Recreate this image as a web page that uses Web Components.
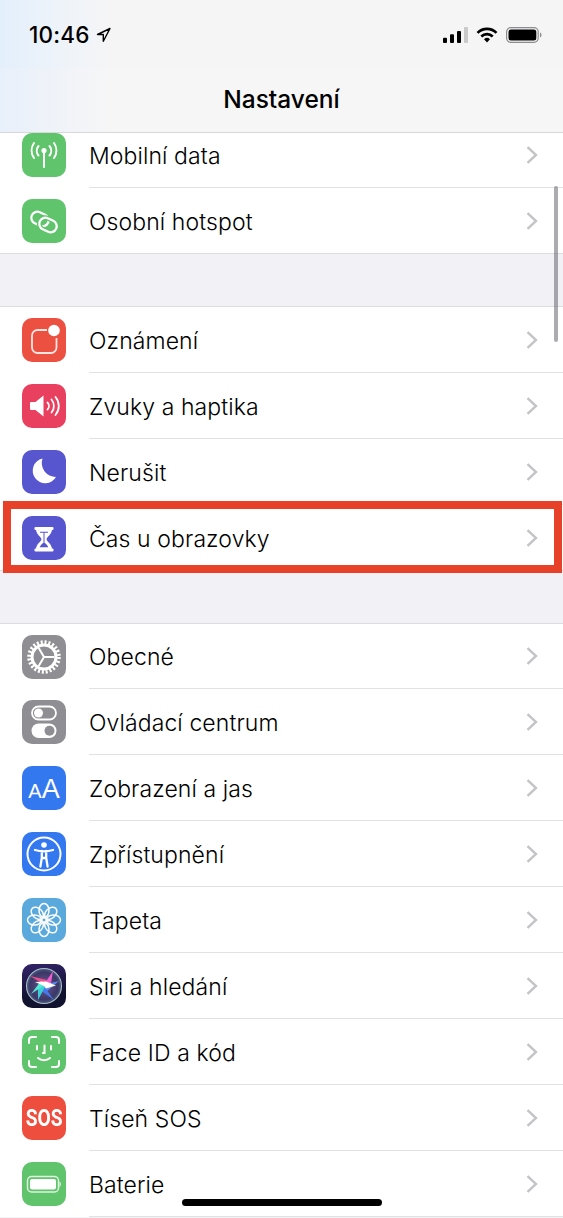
<!DOCTYPE html>
<html lang="cs">
<head>
<meta charset="utf-8">
<title>Nastavení</title>
<style>
  html, body { margin: 0; padding: 0; height: 100%; }
  body { font-family: Inter, "Noto Sans", sans-serif; color: #000; overflow: hidden; }
</style>
</head>
<body>

<settings-screen>
  <status-bar slot="top" time="10:46"></status-bar>
  <nav-bar slot="top" title="Nastavení"></nav-bar>

  <settings-section first>
    <settings-row>
      <app-icon slot="icon" color="#5fc46c">
        <svg viewBox="0 0 44 44" fill="none" stroke="#fff" stroke-width="2" stroke-linecap="round"><circle cx="22" cy="17.500" r="2.600" fill="#fff" stroke="none"/><path d="M22 19v15"/><path d="M16.500 13a7.500 7.500 0 0 0 0 9.500M27.500 13a7.500 7.500 0 0 1 0 9.500M12 10a13 13 0 0 0 0 15M32 10a13 13 0 0 1 0 15"/></svg>
      </app-icon>
      Mobilní data
    </settings-row>
    <settings-row last>
      <app-icon slot="icon" color="#5fc46c">
        <svg viewBox="0 0 44 44" fill="none" stroke-width="2.300"><rect x="9" y="14" width="18" height="12" rx="6" stroke="#fff" transform="rotate(25 18 20)"/><rect x="17" y="20" width="18" height="12" rx="6" stroke="#5fc46c" stroke-width="5" transform="rotate(25 26 26)"/><rect x="17" y="20" width="18" height="12" rx="6" stroke="#fff" transform="rotate(25 26 26)"/></svg>
      </app-icon>
      Osobní hotspot
    </settings-row>
  </settings-section>

  <settings-section>
    <settings-row>
      <app-icon slot="icon" color="#ec5040">
        <svg viewBox="0 0 44 44" fill="none"><path d="M25 12H15.500a5.500 5.500 0 0 0-5.500 5.500v12a5.500 5.500 0 0 0 5.500 5.500h13.500a5.500 5.500 0 0 0 5.500-5.500V20" stroke="#fff" stroke-opacity=".85" stroke-width="1.800"/><circle cx="32" cy="12.500" r="5.800" fill="#fff"/></svg>
      </app-icon>
      Oznámení
    </settings-row>
    <settings-row>
      <app-icon slot="icon" color="#e9405f">
        <svg viewBox="0 0 44 44" fill="none" stroke="#fff" stroke-width="1.800" stroke-linecap="round"><path d="M9 18h4.500l8-6.500v21l-8-6.500H9a1 1 0 0 1-1-1v-6a1 1 0 0 1 1-1z" fill="#fff" stroke="none"/><path d="M25.500 18.500a5 5 0 0 1 0 7M29.500 15.500a10 10 0 0 1 0 13M33.500 13a14 14 0 0 1 0 18"/></svg>
      </app-icon>
      Zvuky a haptika
    </settings-row>
    <settings-row>
      <app-icon slot="icon" color="#5856cf">
        <svg viewBox="0 0 44 44"><path d="M20.500 8.500a12.500 12.500 0 1 0 13.500 18.500 14 14 0 0 1-13.500-18.500z" fill="#fff"/></svg>
      </app-icon>
      Nerušit
    </settings-row>
    <settings-row last>
      <app-icon slot="icon" color="#5856cf">
        <svg viewBox="0 0 44 44" fill="#fff"><rect x="12.500" y="11" width="19" height="3" rx="1"/><rect x="12.500" y="32.500" width="19" height="3" rx="1"/><path d="M14 13h16c0 5.500-5 7.500-5.500 10.200.5 2.800 5.500 4.500 5.500 10.300H14c0-5.800 5-7.500 5.500-10.300C19 20.500 14 18.500 14 13z"/><path d="M18 15.800h8v1h-3.500v10c1.300.8 3 2.300 3.800 4.400h-8.600c.8-2.100 2.500-3.600 3.800-4.400v-10H18z" fill="#5856cf"/></svg>
      </app-icon>
      Čas u obrazovky
    </settings-row>
  </settings-section>

  <settings-section compact>
    <settings-row>
      <app-icon slot="icon" color="#8e8e93">
        <svg viewBox="0 0 44 44" fill="none" stroke="#fff"><circle cx="22" cy="22" r="14.500" stroke-width="4.500" stroke-dasharray="2 1.800"/><circle cx="22" cy="22" r="12" stroke-width="3"/><path d="M22 22h10.500M22 22l-5.300-9.100M22 22l-5.300 9.100" stroke-width="2"/></svg>
      </app-icon>
      Obecné
    </settings-row>
    <settings-row>
      <app-icon slot="icon" color="#8e8e93">
        <svg viewBox="0 0 44 44"><rect x="10" y="6.500" width="24" height="13" rx="6.500" fill="none" stroke="#fff" stroke-width="1.800"/><circle cx="16.500" cy="13" r="4.500" fill="#fff"/><rect x="9.500" y="23.500" width="25" height="14.500" rx="7.250" fill="#fff"/><circle cx="27.500" cy="30.750" r="5" fill="#8e8e93"/></svg>
      </app-icon>
      Ovládací centrum
    </settings-row>
    <settings-row>
      <app-icon slot="icon" color="#3478f0" aa><span style="font-size:20px">A</span><span style="font-size:27px">A</span></app-icon>
      Zobrazení a jas
    </settings-row>
    <settings-row>
      <app-icon slot="icon" color="#3478f0">
        <svg viewBox="0 0 44 44" fill="none" stroke="#fff"><circle cx="22" cy="22" r="16.500" stroke-width="2"/><circle cx="22" cy="13" r="2.800" fill="#fff" stroke="none"/><path d="M13 18c3.500 1 5.500 1.300 9 1.300s5.500-.3 9-1.300M19.800 19v7l-1.400 8.500M24.200 19v7l1.400 8.500M19.800 26h4.400" stroke-width="2.300" stroke-linecap="round"/></svg>
      </app-icon>
      Zpřístupnění
    </settings-row>
    <settings-row>
      <app-icon slot="icon" color="#5aa9dc">
        <svg viewBox="0 0 44 44" fill="none" stroke="#fff" stroke-width="1.500"><circle cx="22" cy="22" r="2.200"/><ellipse cx="22" cy="12.500" rx="5" ry="7"/><ellipse cx="22" cy="12.500" rx="5" ry="7" transform="rotate(45 22 22)"/><ellipse cx="22" cy="12.500" rx="5" ry="7" transform="rotate(90 22 22)"/><ellipse cx="22" cy="12.500" rx="5" ry="7" transform="rotate(135 22 22)"/><ellipse cx="22" cy="12.500" rx="5" ry="7" transform="rotate(180 22 22)"/><ellipse cx="22" cy="12.500" rx="5" ry="7" transform="rotate(225 22 22)"/><ellipse cx="22" cy="12.500" rx="5" ry="7" transform="rotate(270 22 22)"/><ellipse cx="22" cy="12.500" rx="5" ry="7" transform="rotate(315 22 22)"/></svg>
      </app-icon>
      Tapeta
    </settings-row>
    <settings-row>
      <app-icon slot="icon" color="linear-gradient(170deg,#33246a,#10122e 70%)">
        <svg viewBox="0 0 44 44"><defs><radialGradient id="orb"><stop offset="0" stop-color="#6a5590"/><stop offset=".8" stop-color="#3b3766"/><stop offset="1" stop-color="#4d6385"/></radialGradient><filter id="soft" x="-20%" y="-20%" width="140%" height="140%"><feGaussianBlur stdDeviation=".5"/></filter></defs><circle cx="22" cy="22" r="17.500" fill="url(#orb)" stroke="#a9bcc6" stroke-width="1.100"/><g filter="url(#soft)"><path d="M23 21L8 12l17 4z" fill="#f04d8c"/><path d="M21 22L31 7l-3 18z" fill="#ef5fce"/><path d="M21 21l16-4-13 11z" fill="#5a88f2"/><path d="M21 21l11 15-14-10z" fill="#4478ea"/><path d="M24 21l-8 15 0-16z" fill="#3ccfd6"/><path d="M24 20L9 30l10-13z" fill="#55ead2"/><path d="M22 22l-9-4 11-.5 10 4-10 3z" fill="#ffffff"/></g></svg>
      </app-icon>
      Siri a hledání
    </settings-row>
    <settings-row>
      <app-icon slot="icon" color="#5fc46c">
        <svg viewBox="0 0 44 44" fill="none" stroke="#fff" stroke-width="2" stroke-linecap="round"><path d="M7 13V10a3 3 0 0 1 3-3h4M30 7h4a3 3 0 0 1 3 3v3M37 31v3a3 3 0 0 1-3 3h-4M14 37h-4a3 3 0 0 1-3-3v-3"/><path d="M15 16v3.500M29 16v3.500M22.500 15.500v7.500h-1.500M16 28c3.500 3 8.500 3 12 0"/></svg>
      </app-icon>
      Face ID a kód
    </settings-row>
    <settings-row>
      <app-icon slot="icon" color="#ee4e3d" text>SOS</app-icon>
      Tíseň SOS
    </settings-row>
    <settings-row>
      <app-icon slot="icon" color="#5fc46c">
        <svg viewBox="0 0 44 44" fill="none"><rect x="5.500" y="14.500" width="31" height="15.500" rx="4" stroke="#fff" stroke-opacity=".8" stroke-width="1.500"/><rect x="8" y="17" width="26" height="10.500" rx="2" fill="#fff"/><path d="M37.500 19.500c1 .5 1.300 1.500 1.300 2.800s-.3 2.300-1.300 2.800z" fill="#fff" fill-opacity=".8"/></svg>
      </app-icon>
      Baterie
    </settings-row>
  </settings-section>

  <highlight-box slot="overlay"></highlight-box>
  <scroll-thumb slot="overlay"></scroll-thumb>
  <home-indicator slot="overlay"></home-indicator>
</settings-screen>

<script>
class SettingsScreen extends HTMLElement {
    constructor() {
        super();
        this.attachShadow({ mode: 'open' });
        this.shadowRoot.innerHTML = `
            <style>
                :host {
                    display: flex;
                    flex-direction: column;
                    position: relative;
                    width: 563px;
                    height: 1218px;
                    overflow: hidden;
                    background: #f1f1f6;
                }
                .list {
                    flex: 1;
                    overflow: hidden;
                }
                .scrolled {
                    margin-top: -11px;
                }
            </style>
            <slot name="top"></slot>
            <div class="list"><div class="scrolled"><slot></slot></div></div>
            <slot name="overlay"></slot>
        `;
    }
}

class StatusBar extends HTMLElement {
    constructor() {
        super();
        this.attachShadow({ mode: 'open' });
        this.shadowRoot.innerHTML = `
            <style>
                :host {
                    display: flex;
                    justify-content: space-between;
                    align-items: center;
                    height: 68px;
                    padding: 1px 21px 0 29px;
                    box-sizing: border-box;
                    font-size: 22.500px;
                    font-weight: 500;
                    letter-spacing: 0.2px;
                    background: linear-gradient(90deg, #e3effc 0, #eef3f9 60px, #f5f5f6 110px);
                }
                .left, .right { display: flex; align-items: center; }
                .left { gap: 6px; }
                .right { gap: 8px; }
                svg { display: block; }
            </style>
            <div class="left">
                <span>${this.getAttribute('time')}</span>
                <svg width="15" height="16" viewBox="0 0 15 16" fill="none" stroke="#000" stroke-width="1.400" stroke-linejoin="round"><path d="M14 1.500L1.500 7.500h5.800v6.800z"/></svg>
            </div>
            <div class="right">
                <svg width="25" height="16" viewBox="0 0 25 16"><rect x="0" y="10.700" width="4" height="5.300" rx="1"/><rect x="7" y="7.300" width="4" height="8.700" rx="1"/><rect x="14" y="4" width="4" height="12" rx="1"/><rect x="21" y="0" width="4" height="16" rx="1" fill="#c9c9c9"/></svg>
                <svg width="22" height="16" viewBox="0 0 22 16" fill="none" stroke="#000" stroke-width="2.600"><path d="M1.500 5.800a13.500 13.500 0 0 1 19 0"/><path d="M5.300 9.500a8 8 0 0 1 11.400 0"/><path d="M11 15.500l-3-3.200a4.300 4.300 0 0 1 6 0z" fill="#000" stroke="none"/></svg>
                <svg width="36" height="16" viewBox="0 0 36 16"><rect x=".6" y=".6" width="31.600" height="14.800" rx="4.200" fill="none" stroke="#8c8c8e" stroke-width="1.200"/><rect x="2.500" y="2.500" width="27.800" height="11" rx="2.500"/><path d="M34 5.500c1 .4 1.500 1.300 1.500 2.500s-.5 2.100-1.500 2.500z" fill="#8c8c8e"/></svg>
            </div>
        `;
    }
}

class NavBar extends HTMLElement {
    constructor() {
        super();
        this.attachShadow({ mode: 'open' });
        this.shadowRoot.innerHTML = `
            <style>
                :host {
                    display: flex;
                    justify-content: center;
                    align-items: center;
                    height: 65px;
                    padding-bottom: 3px;
                    box-sizing: border-box;
                    font-size: 24.500px;
                    font-weight: 550;
                    background: linear-gradient(90deg, #e8f0fb 0, #f0f3f8 60px, #f6f6f7 110px);
                    border-bottom: 1px solid #d8d8da;
                }
            </style>
            <span>${this.getAttribute('title')}</span>
        `;
    }
}

class SettingsSection extends HTMLElement {
    constructor() {
        super();
        this.attachShadow({ mode: 'open' });
        this.shadowRoot.innerHTML = `
            <style>
                :host {
                    display: block;
                    margin-top: 52px;
                    background: #fff;
                    border-top: 1px solid #dcdce0;
                }
                :host([first]) {
                    margin-top: 0;
                    border-top: none;
                }
                :host([compact]) ::slotted(settings-row:first-child) {
                    height: 65px;
                }
            </style>
            <slot></slot>
        `;
    }
}

class SettingsRow extends HTMLElement {
    constructor() {
        super();
        this.attachShadow({ mode: 'open' });
        this.shadowRoot.innerHTML = `
            <style>
                :host {
                    display: flex;
                    align-items: center;
                    height: 66px;
                    padding-left: 22px;
                    box-sizing: border-box;
                    font-size: 23px;
                    font-weight: 350;
                    letter-spacing: 0.1px;
                }
                .body {
                    flex: 1;
                    align-self: stretch;
                    display: flex;
                    align-items: center;
                    justify-content: space-between;
                    margin-left: 23px;
                    padding-right: 25px;
                    border-bottom: 1px solid #e2e2e5;
                }
                :host([last]) {
                    border-bottom: 1px solid #dcdce0;
                }
                :host([last]) .body {
                    border-bottom: none;
                }
                .label {
                    padding-top: 2px;
                }
                svg { display: block; }
            </style>
            <slot name="icon"></slot>
            <div class="body">
                <span class="label"><slot></slot></span>
                <svg width="12" height="18" viewBox="0 0 12 18" fill="none" stroke="#c4c4c7" stroke-width="2.400"><path d="M1.500 1.200L10 9l-8.500 7.800"/></svg>
            </div>
        `;
    }
}

class AppIcon extends HTMLElement {
    constructor() {
        super();
        this.attachShadow({ mode: 'open' });
        this.shadowRoot.innerHTML = `
            <style>
                :host {
                    display: flex;
                    align-items: center;
                    justify-content: center;
                    flex: none;
                    width: 44px;
                    height: 44px;
                    border-radius: 10px;
                    overflow: hidden;
                    color: #fff;
                    background: ${this.getAttribute('color')};
                }
                :host([text]) {
                    font: 700 24px/1 Roboto, "Liberation Sans", sans-serif;
                }
                :host([text]) .glyphs {
                    transform: scaleX(0.8);
                }
                :host([aa]) {
                    font: 400 26px/1 "Liberation Sans", sans-serif;
                }
                :host([aa]) .glyphs {
                    padding-top: 2px;
                }
                .glyphs {
                    display: inline-block;
                    white-space: nowrap;
                }
                ::slotted(svg) {
                    display: block;
                    width: 44px;
                    height: 44px;
                }
            </style>
            <span class="glyphs"><slot></slot></span>
        `;
    }
}

class HighlightBox extends HTMLElement {
    constructor() {
        super();
        this.attachShadow({ mode: 'open' });
        this.shadowRoot.innerHTML = `
            <style>
                :host {
                    position: absolute;
                    left: 3px;
                    top: 501px;
                    width: 559px;
                    height: 72px;
                    box-sizing: border-box;
                    border: 8px solid #e8412a;
                    pointer-events: none;
                }
            </style>
        `;
    }
}

class ScrollThumb extends HTMLElement {
    constructor() {
        super();
        this.attachShadow({ mode: 'open' });
        this.shadowRoot.innerHTML = `
            <style>
                :host {
                    position: absolute;
                    left: 554px;
                    top: 186px;
                    width: 4px;
                    height: 156px;
                    border-radius: 2px;
                    background: rgba(90, 90, 95, 0.5);
                }
            </style>
        `;
    }
}

class HomeIndicator extends HTMLElement {
    constructor() {
        super();
        this.attachShadow({ mode: 'open' });
        this.shadowRoot.innerHTML = `
            <style>
                :host {
                    position: absolute;
                    left: 182px;
                    top: 1199px;
                    width: 200px;
                    height: 7px;
                    border-radius: 4px;
                    background: #000;
                }
            </style>
        `;
    }
}

customElements.define('settings-screen', SettingsScreen);
customElements.define('status-bar', StatusBar);
customElements.define('nav-bar', NavBar);
customElements.define('settings-section', SettingsSection);
customElements.define('settings-row', SettingsRow);
customElements.define('app-icon', AppIcon);
customElements.define('highlight-box', HighlightBox);
customElements.define('scroll-thumb', ScrollThumb);
customElements.define('home-indicator', HomeIndicator);
</script>
</body>
</html>
